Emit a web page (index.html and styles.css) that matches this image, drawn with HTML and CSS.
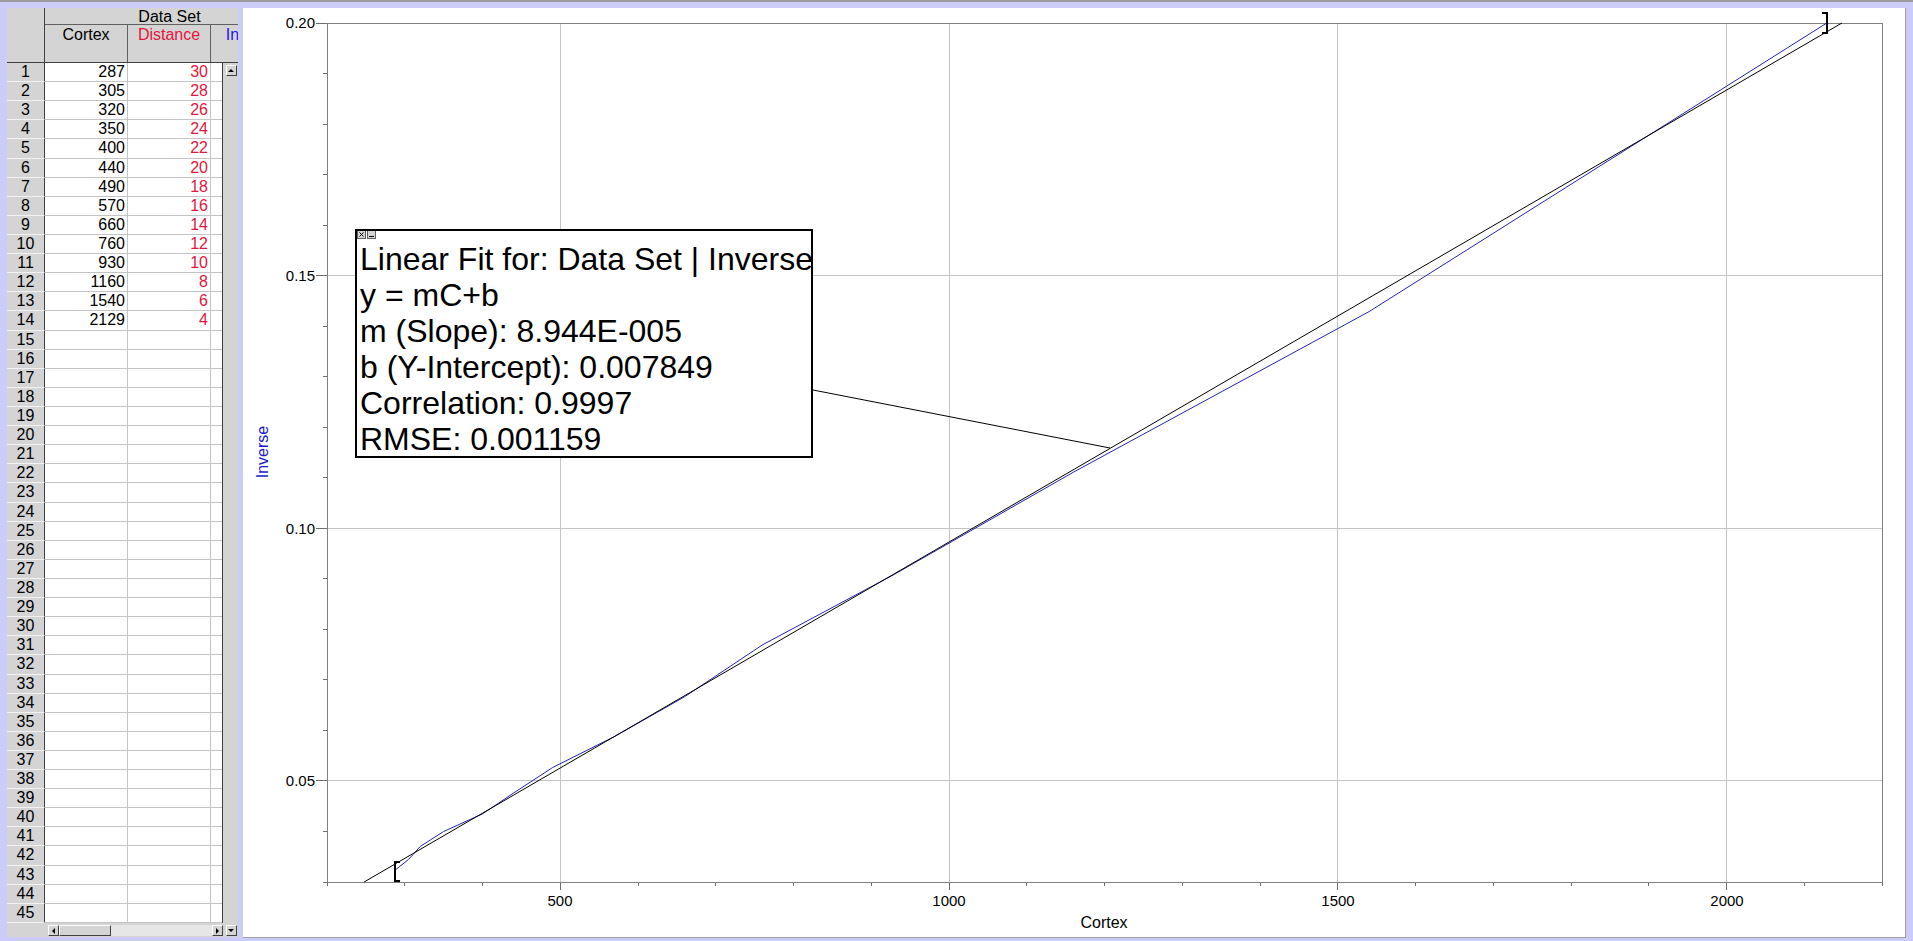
FILE: index.html
```html
<!DOCTYPE html>
<html lang="en">
<head>
  <meta charset="UTF-8">
  <meta name="viewport" content="width=device-width, initial-scale=1.0">
  <title>Data Set - Linear Fit</title>
  <link rel="stylesheet" href="styles.css">
</head>
<body>
  <div class="app">
    <div class="sheet">
      <div class="sheet-head">
        <div class="corner"></div>
        <div class="group">
          <div class="group-name">Data Set</div>
          <div class="col-names">
            <div class="col-name">Cortex</div>
            <div class="col-name red">Distance</div>
            <div class="col-name blue">Inverse</div>
          </div>
        </div>
      </div>
      <div class="sheet-body">
        <div class="row"><span class="num">1</span><span class="cell">287</span><span class="cell red">30</span><span class="cell"></span></div>
        <div class="row"><span class="num">2</span><span class="cell">305</span><span class="cell red">28</span><span class="cell"></span></div>
        <div class="row"><span class="num">3</span><span class="cell">320</span><span class="cell red">26</span><span class="cell"></span></div>
        <div class="row"><span class="num">4</span><span class="cell">350</span><span class="cell red">24</span><span class="cell"></span></div>
        <div class="row"><span class="num">5</span><span class="cell">400</span><span class="cell red">22</span><span class="cell"></span></div>
        <div class="row"><span class="num">6</span><span class="cell">440</span><span class="cell red">20</span><span class="cell"></span></div>
        <div class="row"><span class="num">7</span><span class="cell">490</span><span class="cell red">18</span><span class="cell"></span></div>
        <div class="row"><span class="num">8</span><span class="cell">570</span><span class="cell red">16</span><span class="cell"></span></div>
        <div class="row"><span class="num">9</span><span class="cell">660</span><span class="cell red">14</span><span class="cell"></span></div>
        <div class="row"><span class="num">10</span><span class="cell">760</span><span class="cell red">12</span><span class="cell"></span></div>
        <div class="row"><span class="num">11</span><span class="cell">930</span><span class="cell red">10</span><span class="cell"></span></div>
        <div class="row"><span class="num">12</span><span class="cell">1160</span><span class="cell red">8</span><span class="cell"></span></div>
        <div class="row"><span class="num">13</span><span class="cell">1540</span><span class="cell red">6</span><span class="cell"></span></div>
        <div class="row"><span class="num">14</span><span class="cell">2129</span><span class="cell red">4</span><span class="cell"></span></div>
        <div class="row"><span class="num">15</span><span class="cell"></span><span class="cell"></span><span class="cell"></span></div>
        <div class="row"><span class="num">16</span><span class="cell"></span><span class="cell"></span><span class="cell"></span></div>
        <div class="row"><span class="num">17</span><span class="cell"></span><span class="cell"></span><span class="cell"></span></div>
        <div class="row"><span class="num">18</span><span class="cell"></span><span class="cell"></span><span class="cell"></span></div>
        <div class="row"><span class="num">19</span><span class="cell"></span><span class="cell"></span><span class="cell"></span></div>
        <div class="row"><span class="num">20</span><span class="cell"></span><span class="cell"></span><span class="cell"></span></div>
        <div class="row"><span class="num">21</span><span class="cell"></span><span class="cell"></span><span class="cell"></span></div>
        <div class="row"><span class="num">22</span><span class="cell"></span><span class="cell"></span><span class="cell"></span></div>
        <div class="row"><span class="num">23</span><span class="cell"></span><span class="cell"></span><span class="cell"></span></div>
        <div class="row"><span class="num">24</span><span class="cell"></span><span class="cell"></span><span class="cell"></span></div>
        <div class="row"><span class="num">25</span><span class="cell"></span><span class="cell"></span><span class="cell"></span></div>
        <div class="row"><span class="num">26</span><span class="cell"></span><span class="cell"></span><span class="cell"></span></div>
        <div class="row"><span class="num">27</span><span class="cell"></span><span class="cell"></span><span class="cell"></span></div>
        <div class="row"><span class="num">28</span><span class="cell"></span><span class="cell"></span><span class="cell"></span></div>
        <div class="row"><span class="num">29</span><span class="cell"></span><span class="cell"></span><span class="cell"></span></div>
        <div class="row"><span class="num">30</span><span class="cell"></span><span class="cell"></span><span class="cell"></span></div>
        <div class="row"><span class="num">31</span><span class="cell"></span><span class="cell"></span><span class="cell"></span></div>
        <div class="row"><span class="num">32</span><span class="cell"></span><span class="cell"></span><span class="cell"></span></div>
        <div class="row"><span class="num">33</span><span class="cell"></span><span class="cell"></span><span class="cell"></span></div>
        <div class="row"><span class="num">34</span><span class="cell"></span><span class="cell"></span><span class="cell"></span></div>
        <div class="row"><span class="num">35</span><span class="cell"></span><span class="cell"></span><span class="cell"></span></div>
        <div class="row"><span class="num">36</span><span class="cell"></span><span class="cell"></span><span class="cell"></span></div>
        <div class="row"><span class="num">37</span><span class="cell"></span><span class="cell"></span><span class="cell"></span></div>
        <div class="row"><span class="num">38</span><span class="cell"></span><span class="cell"></span><span class="cell"></span></div>
        <div class="row"><span class="num">39</span><span class="cell"></span><span class="cell"></span><span class="cell"></span></div>
        <div class="row"><span class="num">40</span><span class="cell"></span><span class="cell"></span><span class="cell"></span></div>
        <div class="row"><span class="num">41</span><span class="cell"></span><span class="cell"></span><span class="cell"></span></div>
        <div class="row"><span class="num">42</span><span class="cell"></span><span class="cell"></span><span class="cell"></span></div>
        <div class="row"><span class="num">43</span><span class="cell"></span><span class="cell"></span><span class="cell"></span></div>
        <div class="row"><span class="num">44</span><span class="cell"></span><span class="cell"></span><span class="cell"></span></div>
        <div class="row"><span class="num">45</span><span class="cell"></span><span class="cell"></span><span class="cell"></span></div>
      </div>
      <div class="vscroll">
        <div class="btn up"></div>
        <div class="btn down"></div>
      </div>
      <div class="hscroll">
        <div class="btn left"></div>
        <div class="thumb"></div>
        <div class="track"></div>
        <div class="btn right"></div>
      </div>
    </div>

    <div class="plot">
      <svg class="graph" width="1662" height="929" viewBox="0 0 1662 929">
        <!-- grid -->
        <g class="grid" shape-rendering="crispEdges">
          <path d="M317.5 15V874M706.5 15V874M1094.5 15V874M1483.5 15V874"/>
          <path d="M84 267.5H1639M84 520.5H1639M84 772.5H1639"/>
        </g>
        <!-- ticks -->
        <g class="ticks" shape-rendering="crispEdges">
          <path d="M84.5 874v4M161.5 874v4M239.5 874v4M317.5 874v8M395.5 874v4M472.5 874v4M550.5 874v4M628.5 874v4M706.5 874v8M783.5 874v4M861.5 874v4M939.5 874v4M1017.5 874v4M1094.5 874v8M1172.5 874v4M1250.5 874v4M1328.5 874v4M1405.5 874v4M1483.5 874v8M1561.5 874v4M1639.5 874v4"/>
          <path d="M73 15.5h11M80 65.5h4M80 116.5h4M80 166.5h4M80 217.5h4M73 267.5h11M80 318.5h4M80 368.5h4M80 419.5h4M80 469.5h4M73 520.5h11M80 570.5h4M80 621.5h4M80 671.5h4M80 722.5h4M73 772.5h11M80 823.5h4M80 874.5h4"/>
        </g>
        <rect class="frame" x="84.5" y="15.5" width="1555" height="859" shape-rendering="crispEdges"/>

        <!-- labels -->
        <g class="labels">
          <text x="72" y="20" text-anchor="end">0.20</text>
          <text x="72" y="273" text-anchor="end">0.15</text>
          <text x="72" y="526" text-anchor="end">0.10</text>
          <text x="72" y="778" text-anchor="end">0.05</text>
          <text x="317" y="898" text-anchor="middle">500</text>
          <text x="706" y="898" text-anchor="middle">1000</text>
          <text x="1095" y="898" text-anchor="middle">1500</text>
          <text x="1484" y="898" text-anchor="middle">2000</text>
          <text class="title" x="861" y="920" text-anchor="middle">Cortex</text>
          <text class="title axis-y" x="0" y="0" text-anchor="middle" transform="translate(25 444) rotate(-90)">Inverse</text>
        </g>

        <!-- data + fit -->
        <polyline class="data" points="151.6,862.6 165.6,851.4 177.3,838.4 200.6,823.5 239.5,805.9 270.6,785 309.5,759.6 371.7,728.4 441.7,688.7 519.4,636.9 651.6,566.2 830.4,464.2 1125.9,303.7 1583.8,15"/>
        <line class="fit" x1="121.1" y1="874" x2="1598.9" y2="15"/>
        <path class="bracket" d="M157 854H152V873H157"/>
        <path class="bracket" d="M1579 5H1584V25H1579"/>
        <line class="fit" x1="570" y1="382" x2="867" y2="440"/>
      </svg>

      <div class="fit-box">
        <div class="fit-tools">
          <svg width="9" height="9" viewBox="0 0 9 9"><rect x="0.5" y="0.5" width="8" height="8" fill="#d4d4d4" stroke="#606060"/><path d="M2.5 2.5l4 4M6.5 2.5l-4 4" stroke="#000"/></svg>
          <svg width="9" height="9" viewBox="0 0 9 9"><rect x="0.5" y="0.5" width="8" height="8" fill="#d4d4d4" stroke="#606060"/><path d="M2 6.5h5" stroke="#000"/></svg>
        </div>
        <div>Linear Fit for: Data Set | Inverse</div>
        <div>y = mC+b</div>
        <div>m (Slope): 8.944E-005</div>
        <div>b (Y-Intercept): 0.007849</div>
        <div>Correlation: 0.9997</div>
        <div>RMSE: 0.001159</div>
      </div>
    </div>
  </div>
</body>
</html>
```

FILE: styles.css
```css
* {
  box-sizing: border-box;
}

body {
  margin: 0;
  background-color: #ccccf9;
  border-top: 2px solid #9c9c9c;
  font-family: 'Liberation Sans', Arial, sans-serif;
  overflow: hidden;
}

.app {
  display: flex;
  gap: 5px;
  height: 939px;
  padding: 6px 7px 3px 7px;
}

/* data table */

.sheet {
  flex: none;
  width: 231px;
  height: 929px;
  display: grid;
  grid-template-columns: 216px 15px;
  grid-template-rows: 55px 860px 14px;
  background-color: #d4d4d4;
  font-size: 16px;
  overflow: hidden;
}

.sheet-head {
  grid-column: 1 / 3;
  display: flex;
  border-bottom: 1px solid #404040;
  overflow: hidden;
}

.corner {
  flex: none;
  width: 38px;
  border-right: 1px solid #404040;
}

.group {
  flex: none;
  width: 249px;
  display: flex;
  flex-direction: column;
}

.group-name {
  height: 17px;
  line-height: 17px;
  text-align: center;
  border-bottom: 1px solid #606060;
}

.col-names {
  flex: 1;
  display: flex;
}

.col-name {
  flex: none;
  width: 83px;
  padding-top: 1px;
  line-height: 17px;
  text-align: center;
  border-right: 1px solid #606060;
}

.red {
  color: #e3163c;
}

.blue {
  color: #1a1ae6;
}

.sheet-body {
  background-color: #fff;
  border-right: 1px solid #404040;
  overflow: hidden;
}

.row {
  display: grid;
  grid-template-columns: 38px 83px 83px 83px;
  height: 19.11px;
  line-height: 17px;
}

.num {
  background-color: #d4d4d4;
  text-align: center;
  border-right: 1px solid #404040;
  border-bottom: 1px solid #f2f2f2;
}

.cell {
  text-align: right;
  padding-right: 2px;
  border-right: 1px solid #c4c4c4;
  border-bottom: 1px solid #c4c4c4;
}

/* scroll bars */

.vscroll {
  grid-column: 2;
  grid-row: 2 / 4;
  display: flex;
  flex-direction: column;
  justify-content: space-between;
  align-items: center;
  padding: 2px 0 1px 1px;
}

.hscroll {
  grid-column: 1;
  grid-row: 3;
  display: flex;
  padding: 2px 0 1px 41px;
}

.btn {
  flex: none;
  width: 11px;
  height: 11px;
  background-color: #d4d4d4;
  border: 1px solid;
  border-color: #fff #404040 #404040 #fff;
  display: flex;
  align-items: center;
  justify-content: center;
}

.btn::before {
  content: "";
  border: 3px solid transparent;
}

.btn.up::before {
  border-top-width: 0;
  border-bottom-color: #000;
}

.btn.down::before {
  border-bottom-width: 0;
  border-top-color: #000;
}

.btn.left::before {
  border-left-width: 0;
  border-right-color: #000;
}

.btn.right::before {
  border-right-width: 0;
  border-left-color: #000;
}

.thumb {
  flex: none;
  width: 52px;
  background-color: #d4d4d4;
  border: 1px solid;
  border-color: #fff #404040 #404040 #fff;
}

.track {
  flex: 1;
  background-color: #e6e6e6;
}

/* graph */

.plot {
  flex: 1;
  position: relative;
  background-color: #fff;
  border-right: 1px solid #a0a0a0;
  border-bottom: 1px solid #a0a0a0;
}

.graph {
  display: block;
}

.grid path {
  stroke: #c4c4c4;
  fill: none;
}

.ticks path {
  stroke: #6e6e6e;
  fill: none;
}

.frame {
  fill: none;
  stroke: #808080;
}

.labels text {
  font-family: 'Liberation Sans', Arial, sans-serif;
  font-size: 15px;
  fill: #000;
}

.labels .title {
  font-size: 16px;
}

.labels .axis-y {
  fill: #1a1ad0;
}

.data {
  fill: none;
  stroke: #2424b4;
  stroke-width: 1;
}

.fit {
  stroke: #000;
  stroke-width: 1;
}

.bracket {
  fill: none;
  stroke: #000;
  stroke-width: 2;
}

.fit-box {
  position: absolute;
  left: 112px;
  top: 221px;
  width: 458px;
  height: 229px;
  padding: 10px 0 0 3px;
  background-color: #fff;
  border: 2px solid #000;
  font-size: 32px;
  line-height: 36px;
  white-space: nowrap;
  overflow: hidden;
}

.fit-tools {
  position: absolute;
  left: -2px;
  top: -2px;
  display: flex;
  gap: 1px;
  padding: 1px 3px 2px 2px;
  background-color: #fff;
}

.fit-tools svg {
  display: block;
}
```
